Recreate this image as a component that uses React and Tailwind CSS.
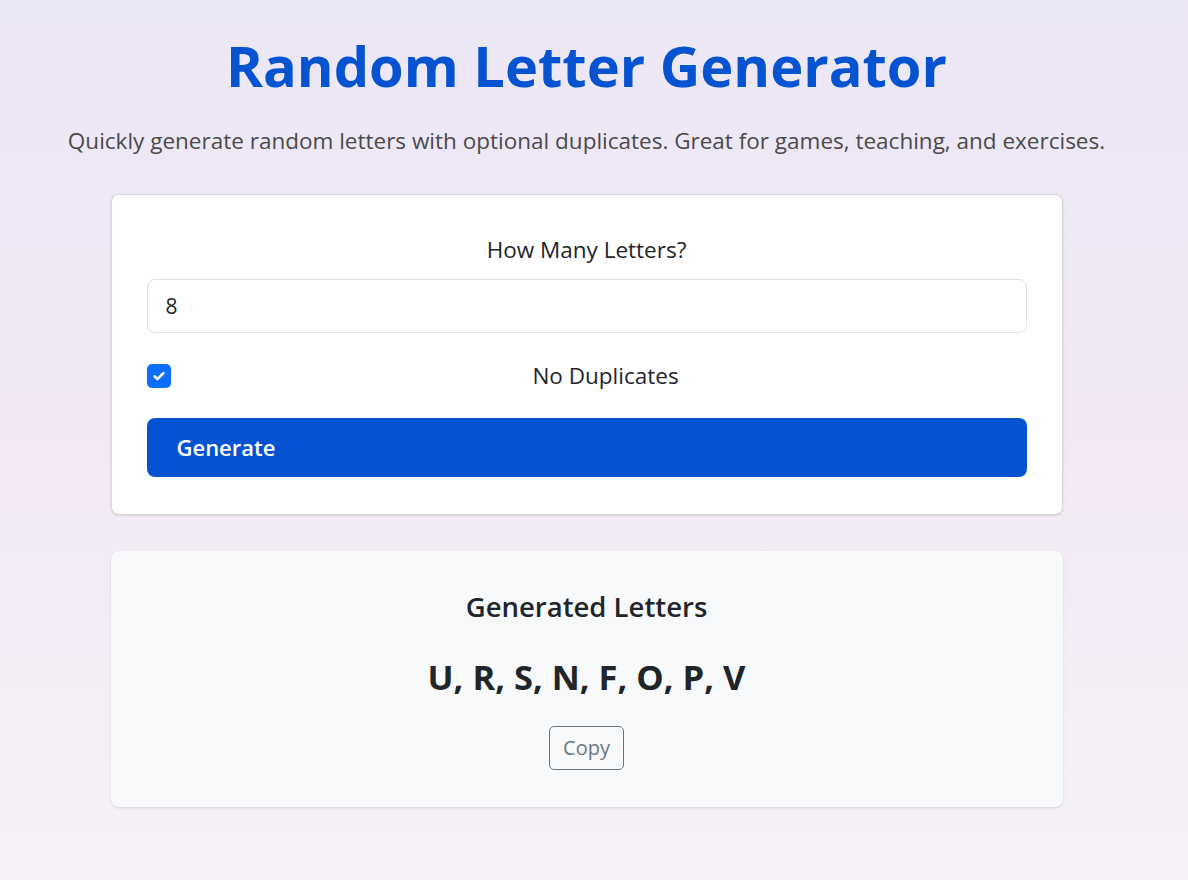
import { useState } from 'react';

const LETTERS = ['U', 'R', 'S', 'N', 'F', 'O', 'P', 'V'];

export default function App() {
  const [count, setCount] = useState('8');
  const [noDup, setNoDup] = useState(true);

  return (
    <div
      className="min-h-screen bg-gradient-to-b from-[#ece7f6] via-[#f2e9f5] to-[#f6f2f8] text-[#212529]"
      style={{ fontFamily: '"Open Sans", "Noto Sans", sans-serif' }}
    >
      <div className="w-[1173px] pt-[28px] pb-10">
        <h1 className="text-center text-[56px] leading-[74px] font-bold text-[#0553d1]">
          Random Letter Generator
        </h1>
        <p className="text-center text-[22.5px] leading-[30px] text-[#4a4a4a] mt-[24px]">
          Quickly generate random letters with optional duplicates. Great for games, teaching, and exercises.
        </p>

        <div className="mx-auto w-[952px] mt-[38px] bg-white border border-[#d9d6dc] rounded-lg shadow-sm px-[35px] pt-[40px] pb-[37px]">
          <label className="block text-center text-[22.5px] leading-[30px] mb-[14px]">How Many Letters?</label>
          <input
            type="number"
            value={count}
            onChange={(e) => setCount(e.target.value)}
            className="block w-full h-[54px] border border-[#dee2e6] rounded-lg px-[18px] text-[21px] outline-none bg-white"
          />
          <div className="flex items-center mt-[28px]">
            <button
              onClick={() => setNoDup(!noDup)}
              className="w-6 h-6 rounded-[5px] bg-[#0d6efd] flex items-center justify-center shrink-0"
            >
              {noDup && (
                <svg width="16" height="16" viewBox="0 0 20 20" fill="none">
                  <path d="M4.5 10.5l3.5 3.3L15.5 6.5" stroke="white" strokeWidth="3.2" strokeLinecap="round" strokeLinejoin="round" />
                </svg>
              )}
            </button>
            <span className="flex-1 ml-[14px] text-center text-[22.5px] leading-[30px]">No Duplicates</span>
          </div>
          <button className="mt-[27px] w-full h-[59px] bg-[#0553d1] rounded-lg text-white text-[22px] font-semibold text-left px-[30px]">
            Generate
          </button>
        </div>

        <div className="mx-auto w-[952px] mt-[36px] bg-[#f8f9fa] rounded-lg shadow-sm pt-[37px] pb-[37px] flex flex-col items-center">
          <h2 className="text-[27.5px] leading-[38px] font-semibold">Generated Letters</h2>
          <div className="text-[34.5px] leading-[48px] font-bold mt-[27px]">{LETTERS.join(', ')}</div>
          <button className="mt-[25px] h-[44px] border border-[#6c757d] rounded-[5px] text-[#6c757d] text-[20px] leading-[28px] px-[13px]">
            Copy
          </button>
        </div>
      </div>
    </div>
  );
}
